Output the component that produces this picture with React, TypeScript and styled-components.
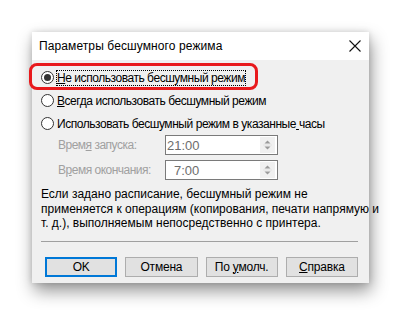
import React from 'react'
import styled, { createGlobalStyle } from 'styled-components'

const GlobalStyle = createGlobalStyle`
  html, body {
    margin: 0;
    padding: 0;
    background: #ffffff;
  }
  body {
    font-family: 'Liberation Sans', Arial, sans-serif;
    font-size: 12px;
    color: #000;
  }
`

type RadioProps = {
  label: string
  accessKey: number
  checked?: boolean
  focused?: boolean
}

function Radio({ label, accessKey, checked, focused }: RadioProps) {
  const before = label.slice(0, accessKey)
  const key = label.charAt(accessKey)
  const after = label.slice(accessKey + 1)
  return (
    <RadioRow>
      <Circle>{checked && <Dot />}</Circle>
      <RadioLabel $focused={focused}>
        {before}
        <U>{key}</U>
        {after}
      </RadioLabel>
    </RadioRow>
  )
}

function Spinner({ value, indent }: { value: string; indent?: boolean }) {
  return (
    <SpinBox>
      <SpinValue $indent={indent}>{value}</SpinValue>
      <SpinButtons>
        <svg width='9' height='12' viewBox='0 0 9 12'>
          <path d='M1.5 4.5 L4.5 1.5 L7.5 4.5 Z' fill='#9a9a9a' />
          <path d='M0 6 H9' stroke='#e2e2e2' strokeWidth='1' />
          <path d='M1.5 7.5 L4.5 10.5 L7.5 7.5 Z' fill='#9a9a9a' />
        </svg>
      </SpinButtons>
    </SpinBox>
  )
}

function App() {
  return (
    <>
      <GlobalStyle />
      <Page>
        <Dialog>
          <TitleBar>
            <Title>Параметры бесшумного режима</Title>
            <Close>
              <svg width='12' height='12' viewBox='0 0 12 12'>
                <path d='M0.5 0.5 L11.5 11.5 M11.5 0.5 L0.5 11.5' stroke='#111' strokeWidth='1.1' />
              </svg>
            </Close>
          </TitleBar>
          <Body>
            <Highlight />
            <Options>
              <Radio label='Не использовать бесшумный режим' accessKey={0} checked focused />
              <Radio label='Всегда использовать бесшумный режим' accessKey={0} />
              <Radio label='Использовать бесшумный режим в указанные часы' accessKey={40} />
            </Options>
            <TimeRows>
              <TimeRow>
                <TimeLabel>
                  Врем<U>я</U>{' запуска:'}
                </TimeLabel>
                <Spinner value='21:00' />
              </TimeRow>
              <TimeRow>
                <TimeLabel>
                  В<U>р</U>емя окончания:
                </TimeLabel>
                <Spinner value='7:00' indent />
              </TimeRow>
            </TimeRows>
            <Note>
              Если задано расписание, бесшумный режим не
              <br />
              применяется к операциям (копирования, печати напрямую и
              <br />
              т. д.), выполняемым непосредственно с принтера.
            </Note>
            <Separator />
            <Buttons>
              <Button $default>
                <Caption>OK</Caption>
              </Button>
              <Button>
                <Caption>Отмена</Caption>
              </Button>
              <Button>
                <Caption>
                  {'По '}
                  <U>у</U>
                  {'молч.'}
                </Caption>
              </Button>
              <Button>
                <Caption>
                  <U>С</U>правка
                </Caption>
              </Button>
            </Buttons>
          </Body>
        </Dialog>
      </Page>
    </>
  )
}

export default App

const Page = styled.div`
  width: 401px;
  height: 316px;
  padding: 32px 0 0 32px;
  box-sizing: border-box;
`

const Dialog = styled.div`
  width: 337px;
  height: 251px;
  display: flex;
  flex-direction: column;
  background: #f0f0f0;
  box-shadow: 2px 8px 16px rgba(0, 0, 0, 0.42), 0 0 6px rgba(0, 0, 0, 0.14);
`

const TitleBar = styled.div`
  height: 28px;
  background: #ffffff;
  display: flex;
  align-items: center;
  justify-content: space-between;
  padding: 0 7px 0 7px;
`

const Title = styled.div`
  font-size: 12px;
  color: #000;
  letter-spacing: 0.1px;
`

const Close = styled.div`
  display: flex;
  align-items: center;
  justify-content: center;
  width: 14px;
  height: 14px;
`

const Body = styled.div`
  position: relative;
  flex: 1;
  padding: 6px 11px 0 9px;
  display: flex;
  flex-direction: column;
`

const Highlight = styled.div`
  position: absolute;
  left: -3px;
  top: 3px;
  width: 223px;
  height: 21px;
  border: 3px solid #e8191c;
  border-radius: 8px;
  pointer-events: none;
`

const Options = styled.div`
  display: flex;
  flex-direction: column;
`

const RadioRow = styled.div`
  height: 23px;
  display: flex;
  align-items: center;
  gap: 3px;
`

const Circle = styled.div`
  width: 11px;
  height: 11px;
  border: 1px solid #333;
  border-radius: 50%;
  background: #fff;
  display: flex;
  align-items: center;
  justify-content: center;
`

const Dot = styled.div`
  width: 7px;
  height: 7px;
  border-radius: 50%;
  background: #333;
`

const RadioLabel = styled.span<{ $focused?: boolean }>`
  white-space: nowrap;
  line-height: 14px;
  letter-spacing: -0.45px;
  outline: ${p => (p.$focused ? '1px dotted #000' : 'none')};
`

const U = styled.span`
  text-decoration: underline;
`

const TimeRows = styled.div`
  display: flex;
  flex-direction: column;
  gap: 5px;
  padding-left: 17px;
`

const TimeRow = styled.div`
  display: flex;
  align-items: center;
`

const TimeLabel = styled.span`
  width: 107px;
  color: #a0a0a0;
  white-space: nowrap;
  letter-spacing: -0.5px;
`

const SpinBox = styled.div`
  width: 113px;
  height: 20px;
  box-sizing: border-box;
  border: 1px solid #7a7a7a;
  background: #fff;
  display: flex;
  align-items: center;
  justify-content: space-between;
`

const SpinValue = styled.span<{ $indent?: boolean }>`
  color: #6d6d6d;
  font-size: 13px;
  padding-left: ${p => (p.$indent ? '8px' : '1px')};
`

const SpinButtons = styled.div`
  width: 15px;
  height: 16px;
  margin-right: 2px;
  background: #f0f0f0;
  display: flex;
  align-items: center;
  justify-content: center;
`

const Note = styled.div`
  margin-top: 7px;
  line-height: 14.5px;
  white-space: nowrap;
`

const Separator = styled.div`
  margin-top: 10px;
  height: 1px;
  background: #a0a0a0;
`

const Buttons = styled.div`
  margin-top: 15px;
  display: flex;
  gap: 8px;
  padding-left: 4px;
`

const Button = styled.div<{ $default?: boolean }>`
  width: 73px;
  height: 20px;
  box-sizing: border-box;
  border: ${p => (p.$default ? '2px solid #0078d7' : '1px solid #adadad')};
  background: #e1e1e1;
  display: flex;
  align-items: center;
  justify-content: center;
`

const Caption = styled.span`
  white-space: nowrap;
  letter-spacing: -0.2px;
`
